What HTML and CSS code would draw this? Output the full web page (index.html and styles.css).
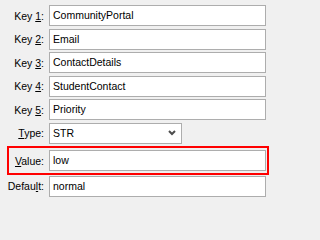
FILE: index.html
```html
<!DOCTYPE html>
<html>
<head>
<meta charset="utf-8">
<link rel="stylesheet" href="styles.css">
</head>
<body>
<div class="form">
  <div class="row"><label class="lbl">Key <u>1</u>:</label><div class="field">CommunityPortal</div></div>
  <div class="row"><label class="lbl">Key <u>2</u>:</label><div class="field">Email</div></div>
  <div class="row"><label class="lbl">Key <u>3</u>:</label><div class="field">ContactDetails</div></div>
  <div class="row"><label class="lbl">Key <u>4</u>:</label><div class="field">StudentContact</div></div>
  <div class="row"><label class="lbl">Key <u>5</u>:</label><div class="field">Priority</div></div>
  <div class="row"><label class="lbl"><u>T</u>ype:</label>
    <div class="select"><span class="select-text">STR</span>
      <svg class="chev" width="8" height="6" viewBox="0 0 8 6"><polyline points="1,1 4,4 7,1" fill="none" stroke="#4d4d4d" stroke-width="2"/></svg>
    </div>
  </div>
  <div class="highlight">
    <div class="row inner"><label class="lbl lbl-inner"><u>V</u>alue:</label><div class="field">low</div></div>
  </div>
  <div class="row"><label class="lbl">Defau<u>l</u>t:</label><div class="field">normal</div></div>
</div>
</body>
</html>
```
FILE: styles.css
```css
html, body {
  margin: 0;
  padding: 0;
  background: #f0f0f0;
}
body {
  font-family: "Liberation Sans", Arial, sans-serif;
  font-size: 10.5px;
  color: #000;
  width: 271px;
  height: 202px;
  overflow: hidden;
}
.form {
  display: flex;
  flex-direction: column;
  gap: 2.5px;
  padding: 5px 5px 0 0;
}
.row {
  display: flex;
  align-items: center;
  gap: 5px;
  height: 21px;
}
.lbl {
  width: 44px;
  flex: none;
  text-align: right;
  white-space: nowrap;
}
.lbl-inner {
  width: 35px;
}
.field {
  flex: 1;
  height: 19px;
  line-height: 19px;
  border: 1px solid #adadad;
  background: #fff;
  padding-left: 3px;
  white-space: nowrap;
}
.select {
  width: 123px;
  height: 19px;
  border: 1px solid #adadad;
  background: #fff;
  display: flex;
  align-items: center;
  justify-content: space-between;
  padding: 0 5px 0 3px;
  box-sizing: content-box;
}
.chev {
  display: block;
}
.highlight {
  margin: 0 -3px -2px 7px;
  border: 2px solid #ff0000;
  padding: 2px 1px 2px 0;
}
```
